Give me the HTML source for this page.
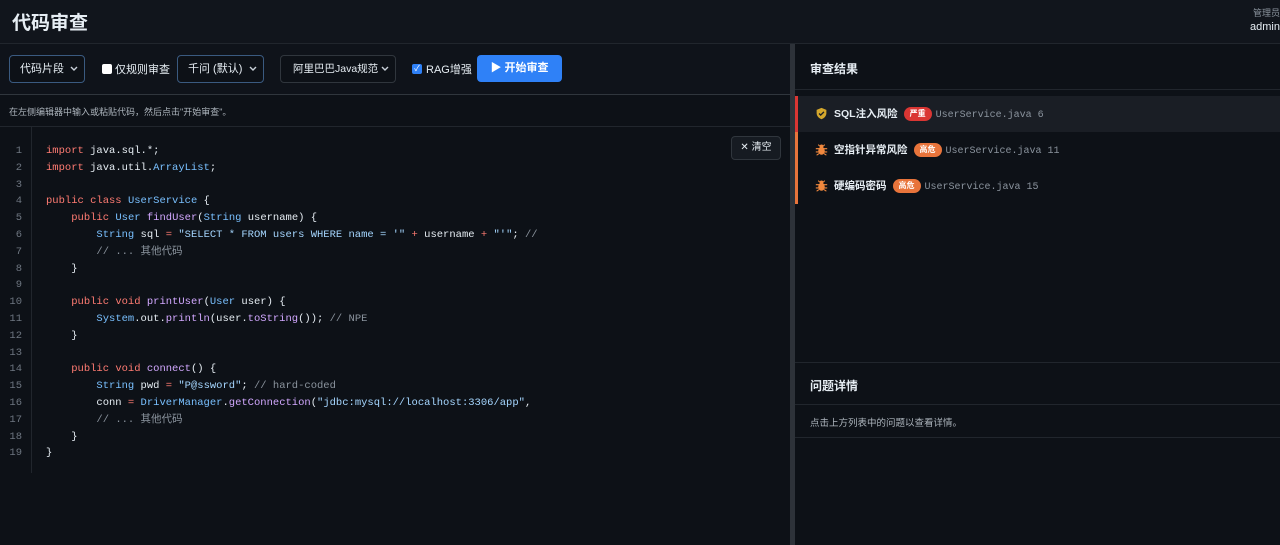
<!DOCTYPE html>
<html><head><meta charset="utf-8"><style>
*{margin:0;padding:0;box-sizing:border-box}
body{width:1280px;height:545px;background:#0d1117;color:#e6edf3;font-family:"Liberation Sans","Noto Sans CJK SC",sans-serif;overflow:hidden;position:relative}
.hdr{position:absolute;left:0;top:0;width:1280px;height:44px;background:#11151c;border-bottom:1px solid #21262d}
.hdr h1{position:absolute;left:12px;top:8px;font-size:19px;font-weight:bold;color:#e6edf3}
.user{position:absolute;right:0;top:7px;text-align:right;font-size:9px;color:#8b949e;line-height:12px}
.user b{display:block;font-size:11px;color:#e6edf3;font-weight:normal;margin-top:2px}
.left{position:absolute;left:0;top:44px;width:790px;height:501px;background:#0d1117}
.tb{position:absolute;left:0;top:0;width:790px;height:51px;border-bottom:1px solid #30363d;background:#0f131a}
.sel{position:absolute;top:11px;height:28px;border:1px solid #3a5a80;border-radius:4px;background:#0d1117;font-size:11px;color:#e6edf3;padding:0 0 0 10px;line-height:26px}
.sel svg{position:absolute;right:6px;top:10px;width:8px;height:6px}
.cb{position:absolute;top:20px;width:10px;height:10px;background:#fff;border-radius:2px}
.lbl{position:absolute;top:17px;font-size:11px;color:#e6edf3}
.btn{position:absolute;left:477px;top:11px;width:85px;height:27px;background:#2f81f7;border-radius:4px;color:#fff;font-size:11px;font-weight:bold;text-align:center;line-height:27px}
.info{position:absolute;left:0;top:51px;width:790px;height:32px;border-bottom:1px solid #21262d;font-size:9px;color:#adb5bd;padding:10px 0 0 9px}
.ed{position:absolute;left:0;top:83px;width:790px;height:418px}
.gut{position:absolute;left:0;top:0;width:32px;height:346px;border-right:1px solid #21262d}
.ln{position:absolute;left:0;top:16px;width:22px;text-align:right;font-family:"Liberation Mono",monospace;font-size:10.5px;line-height:16.8px;color:#6e7681}
pre{position:absolute;left:46px;top:16px;font-family:"Liberation Mono","Noto Sans CJK SC",monospace;font-size:10.5px;line-height:16.8px;color:#e6edf3}
.k{color:#ff7b72}.t{color:#79c0ff}.f{color:#d2a8ff}.s{color:#a5d6ff}.c{color:#8b949e}
.clr{position:absolute;left:731px;top:9px;width:50px;height:24px;border:1px solid #30363d;border-radius:4px;background:#161b22;font-size:10px;color:#e6edf3;text-align:center;line-height:22px}
.div{position:absolute;left:790px;top:44px;width:5px;height:501px;background:#2d3239}
.right{position:absolute;left:795px;top:44px;width:485px;height:501px;background:#0d1117}
.ph{position:absolute;left:0;width:485px;height:46px;border-bottom:1px solid #21262d;font-size:12px;font-weight:bold;padding:16px 0 0 15px;background:#0d1117}
.it{position:absolute;left:0;width:485px;height:36px;font-size:10.5px;font-weight:bold;padding:0 0 0 36px;line-height:36px}
.it .ic{position:absolute;left:17px;top:11px;width:13px;height:13px}
.bd{display:inline-block;font-size:8px;color:#fff;border-radius:7px;padding:0 6px;line-height:14px;height:14px;vertical-align:1px;margin-left:6px}
.fn{font-family:"Liberation Mono",monospace;font-weight:normal;font-size:10px;color:#8b949e;margin-left:4px}
</style></head><body>
<div class="hdr"><h1>代码审查</h1><div class="user">管理员<b>admin</b></div></div>
<div class="left">
 <div class="tb">
  <div class="sel" style="left:9px;width:76px">代码片段<svg viewBox="0 0 8 6"><path d="M1 1l3 3 3-3" stroke="#c9d1d9" stroke-width="1.4" fill="none"/></svg></div>
  <div class="cb" style="left:102px"></div><div class="lbl" style="left:115px">仅规则审查</div>
  <div class="sel" style="left:177px;width:87px">千问 (默认)<svg viewBox="0 0 8 6"><path d="M1 1l3 3 3-3" stroke="#c9d1d9" stroke-width="1.4" fill="none"/></svg></div>
  <div class="sel" style="left:280px;width:116px;border-color:#30363d;padding-left:12px;font-size:10.5px">阿里巴巴Java规范<svg viewBox="0 0 8 6"><path d="M1 1l3 3 3-3" stroke="#c9d1d9" stroke-width="1.4" fill="none"/></svg></div>
  <div class="cb" style="left:412px;background:#2f81f7;color:#fff;font-size:8px;line-height:10px;text-align:center">✓</div><div class="lbl" style="left:426px">RAG增强</div>
  <div class="btn">▶ 开始审查</div>
 </div>
 <div class="info">在左侧编辑器中输入或粘贴代码，然后点击"开始审查"。</div>
 <div class="ed">
  <div class="gut"></div>
  <div class="ln">1<br>2<br>3<br>4<br>5<br>6<br>7<br>8<br>9<br>10<br>11<br>12<br>13<br>14<br>15<br>16<br>17<br>18<br>19</div>
<pre><span class="k">import</span> java.sql.*;
<span class="k">import</span> java.util.<span class="t">ArrayList</span>;

<span class="k">public class</span> <span class="t">UserService</span> {
    <span class="k">public</span> <span class="t">User</span> <span class="f">findUser</span>(<span class="t">String</span> username) {
        <span class="t">String</span> sql <span class="k">=</span> <span class="s">"SELECT * FROM users WHERE name = '"</span> <span class="k">+</span> username <span class="k">+</span> <span class="s">"'"</span>; <span class="c">//</span>
        <span class="c">// ... 其他代码</span>
    }

    <span class="k">public void</span> <span class="f">printUser</span>(<span class="t">User</span> user) {
        <span class="t">System</span>.out.<span class="f">println</span>(user.<span class="f">toString</span>()); <span class="c">// NPE</span>
    }

    <span class="k">public void</span> <span class="f">connect</span>() {
        <span class="t">String</span> pwd <span class="k">=</span> <span class="s">"P@ssword"</span>; <span class="c">// hard-coded</span>
        conn <span class="k">=</span> <span class="t">DriverManager</span>.<span class="f">getConnection</span>(<span class="s">"jdbc:mysql://localhost:3306/app"</span>,
        <span class="c">// ... 其他代码</span>
    }
}</pre>
  <div class="clr">✕ 清空</div>
 </div>
</div>
<div class="div"></div>
<div class="right">
 <div class="ph" style="top:0">审查结果</div>
 <div class="it" style="top:52px;background:#1a1e25;border-left:3px solid #da3633"><svg class="ic" viewBox="0 0 16 16"><path d="M8 1l6 2.5v4c0 3.5-2.6 6.2-6 7.5-3.4-1.3-6-4-6-7.5v-4z" fill="#d4a72c"/><path d="M5 8l2 2 4-4" stroke="#1a1e25" stroke-width="1.6" fill="none"/></svg>SQL注入风险<span class="bd" style="background:#da3633">严重</span><span class="fn">UserService.java 6</span></div>
 <div class="it" style="top:88px;border-left:3px solid #e8743b"><svg class="ic" viewBox="0 0 16 16"><ellipse cx="8" cy="9.5" rx="4" ry="5" fill="#f0883e"/><circle cx="8" cy="4" r="2.2" fill="#f0883e"/><path d="M1 7h14M1 11h14M2 15l3-2M14 15l-3-2M4 2l2 2M12 2l-2 2" stroke="#f0883e" stroke-width="1.3"/></svg>空指针异常风险<span class="bd" style="background:#e8743b">高危</span><span class="fn">UserService.java 11</span></div>
 <div class="it" style="top:124px;border-left:3px solid #e8743b"><svg class="ic" viewBox="0 0 16 16"><ellipse cx="8" cy="9.5" rx="4" ry="5" fill="#f0883e"/><circle cx="8" cy="4" r="2.2" fill="#f0883e"/><path d="M1 7h14M1 11h14M2 15l3-2M14 15l-3-2M4 2l2 2M12 2l-2 2" stroke="#f0883e" stroke-width="1.3"/></svg>硬编码密码<span class="bd" style="background:#e8743b">高危</span><span class="fn">UserService.java 15</span></div>
 <div class="ph" style="top:318px;height:43px;border-top:1px solid #21262d;padding-top:14px">问题详情</div>
 <div style="position:absolute;left:0;top:361px;width:485px;height:33px;border-bottom:1px solid #21262d;font-size:9.5px;color:#adb5bd;padding:10px 0 0 15px">点击上方列表中的问题以查看详情。</div>
</div>
</body></html>
